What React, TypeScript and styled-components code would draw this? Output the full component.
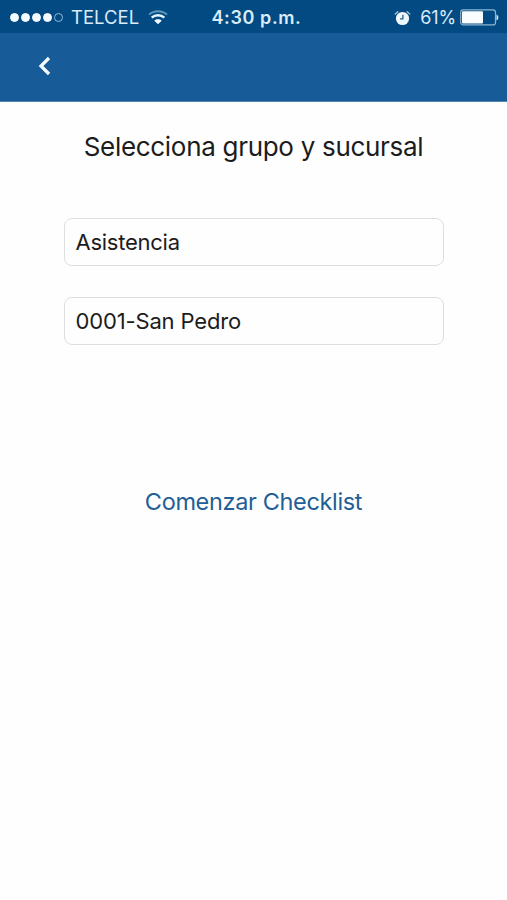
import React from "react";
import styled, { createGlobalStyle } from "styled-components";

const GlobalStyle = createGlobalStyle`
  * { box-sizing: border-box; }
  body { margin: 0; background: #fefefe; }
`;

const Screen = styled.div`
  height: 900px;
  display: flex;
  flex-direction: column;
  background: #fefefe;
  color: #1c1c1c;
  font-family: Inter, "Liberation Sans", sans-serif;
`;

const StatusBar = styled.div`
  height: 33px;
  padding: 1px 8px 0 10px;
  display: grid;
  grid-template-columns: 1fr auto 1fr;
  align-items: center;
  background: #034a82;
  color: #d9ecf8;
  font-size: 18px;
  line-height: 32px;
  white-space: nowrap;
`;

const StatusGroup = styled.div<{ $end?: boolean }>`
  display: flex;
  align-items: center;
  justify-content: ${(p) => (p.$end ? "flex-end" : "flex-start")};
`;

const Signal = styled.div`
  display: flex;
  gap: 2px;
  margin-right: 8px;
`;

const Dot = styled.span<{ $filled: boolean }>`
  width: 9px;
  height: 9px;
  border-radius: 50%;
  border: 1px solid ${(p) => (p.$filled ? "#f4fbff" : "#8fb9d6")};
  background: ${(p) => (p.$filled ? "#f4fbff" : "transparent")};
`;

const Carrier = styled.span`
  font-size: 18.5px;
  line-height: 30px;
  padding-bottom: 2px;
  margin-right: 9px;
`;

const Clock = styled.span`
  padding: 1px 0 0 4px;
  font-weight: 600;
  letter-spacing: 0.6px;
`;

const Percent = styled.span`
  margin: 0 4px 0 9px;
  letter-spacing: -0.1px;
`;

const NavBar = styled.header`
  height: 69px;
  padding: 0 0 3px 36px;
  display: flex;
  align-items: center;
  background: #175b98;
  border-bottom: 1px solid #5583aa;
`;

const BackButton = styled.button`
  display: flex;
  padding: 0;
  border: 0;
  background: none;
`;

const Content = styled.main`
  display: flex;
  flex-direction: column;
  align-items: center;
`;

const Title = styled.h1`
  margin: 29px 0 55px;
  font-size: 26px;
  line-height: 32px;
  font-weight: 400;
  letter-spacing: -0.3px;
`;

const Fields = styled.div`
  width: 380px;
  display: grid;
  gap: 31px;
`;

const Field = styled.div<{ $tracking: number }>`
  height: 48px;
  padding: 0 11px;
  border: 1px solid #dedede;
  border-radius: 8px;
  font-size: 22px;
  line-height: 46px;
  letter-spacing: ${(p) => p.$tracking}px;
`;

const StartButton = styled.button`
  margin: 141px 0 0;
  padding: 0;
  border: 0;
  background: none;
  color: #225f96;
  font: 400 23.5px/32px Inter, "Liberation Sans", sans-serif;
  letter-spacing: -0.35px;
`;

const WifiIcon = () => (
  <svg width="20" height="15" viewBox="0 0 20 15" fill="none">
    <path d="M1 4.600C6 .1 14 .1 19 4.600" stroke="#5f96bd" strokeWidth="1.900" />
    <path d="M3.700 7.700c3.400-3.200 9.200-3.200 12.600 0" stroke="#e4f4fc" strokeWidth="2.400" />
    <path d="M6.300 10.700c2-1.900 5.400-1.900 7.400 0L10 14.300Z" fill="#f4fbff" />
  </svg>
);

const AlarmIcon = () => (
  <svg width="17" height="16" viewBox="0 0 17 16" fill="none">
    <circle cx="8.500" cy="8.500" r="6.600" fill="#eef8fd" />
    <path d="M1.300 4 3.800 1.700M15.700 4 13.200 1.700" stroke="#9cc3dc" strokeWidth="1.500" strokeLinecap="round" />
    <path d="M8.900 4.800v4H6" stroke="#24618f" strokeWidth="1.300" />
  </svg>
);

const BatteryIcon = () => (
  <svg width="39" height="17" viewBox="0 0 39 17" fill="none">
    <rect x=".7" y=".9" width="34.800" height="15" rx="2.500" stroke="#8db5d1" strokeWidth="1.200" />
    <rect x="2" y="2.200" width="21" height="12.400" rx="1" fill="#fafdff" />
    <path d="M36.500 5.500c2.400 1 2.400 5 0 6Z" fill="#d9ecf8" />
  </svg>
);

const BackIcon = () => (
  <svg width="17" height="22" viewBox="0 0 17 22" fill="none">
    <path d="M13 3 5 11l8 8" stroke="#f8fcff" strokeWidth="3.200" />
  </svg>
);

export default function App() {
  return (
    <Screen>
      <GlobalStyle />
      <StatusBar>
        <StatusGroup>
          <Signal>
            {[true, true, true, true, false].map((filled, i) => (
              <Dot key={i} $filled={filled} />
            ))}
          </Signal>
          <Carrier>TELCEL</Carrier>
          <WifiIcon />
        </StatusGroup>
        <Clock>4:30 p.m.</Clock>
        <StatusGroup $end>
          <AlarmIcon />
          <Percent>61%</Percent>
          <BatteryIcon />
        </StatusGroup>
      </StatusBar>
      <NavBar>
        <BackButton aria-label="Regresar">
          <BackIcon />
        </BackButton>
      </NavBar>
      <Content>
        <Title>Selecciona grupo y sucursal</Title>
        <Fields>
          <Field $tracking={-0.25}>Asistencia</Field>
          <Field $tracking={-0.15}>0001-San Pedro</Field>
        </Fields>
        <StartButton>Comenzar Checklist</StartButton>
      </Content>
    </Screen>
  );
}
